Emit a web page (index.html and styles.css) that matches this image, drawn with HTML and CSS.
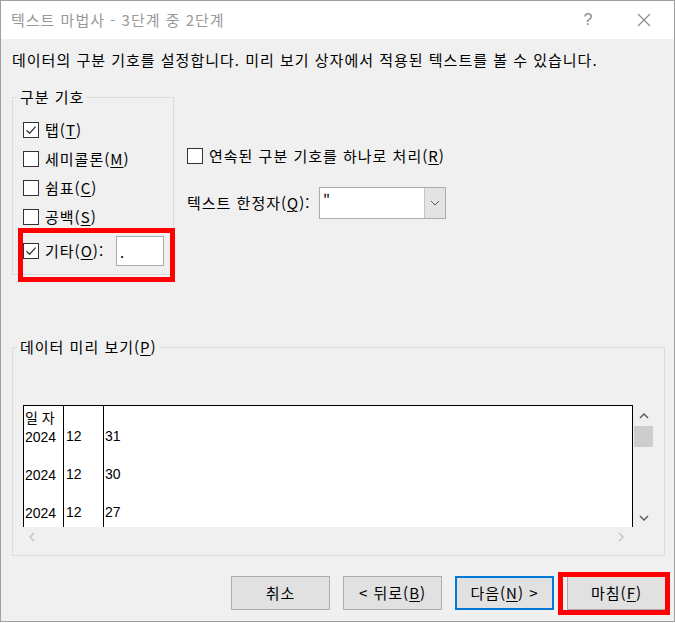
FILE: index.html
```html
<!DOCTYPE html>
<html lang="ko">
<head>
<meta charset="utf-8">
<title>텍스트 마법사</title>
<link rel="stylesheet" href="styles.css">
</head>
<body>
<div class="window">
  <div class="titlebar">
    <span class="title">텍스트 마법사 - 3단계 중 2단계</span>
    <span class="help">?</span>
    <span class="close"><svg width="14" height="14" viewBox="0 0 14 14"><path d="M1 1 L13 13 M13 1 L1 13" stroke="#8a8a8a" stroke-width="1.1" fill="none"/></svg></span>
  </div>
  <div class="content">
    <p class="intro">데이터의 구분 기호를 설정합니다. 미리 보기 상자에서 적용된 텍스트를 볼 수 있습니다.</p>
    <div class="options">
      <fieldset class="group delims">
        <legend>구분 기호</legend>
        <div class="rows">
          <div class="check"><span class="box"><svg width="14" height="14" viewBox="0 0 14 14"><path d="M2.5 7.2 L5.6 10.2 L11.6 3.6" stroke="#3a3a3a" stroke-width="1.3" fill="none"/></svg></span><span>탭(<u>T</u>)</span></div>
          <div class="check"><span class="box"></span><span>세미콜론(<u>M</u>)</span></div>
          <div class="check"><span class="box"></span><span>쉼표(<u>C</u>)</span></div>
          <div class="check"><span class="box"></span><span>공백(<u>S</u>)</span></div>
          <div class="check other"><span class="box"><svg width="14" height="14" viewBox="0 0 14 14"><path d="M2.5 7.2 L5.6 10.2 L11.6 3.6" stroke="#3a3a3a" stroke-width="1.3" fill="none"/></svg></span><span>기타(<u>O</u>):</span><span class="textbox">.</span></div>
        </div>
      </fieldset>
      <div class="right">
        <div class="check"><span class="box"></span><span>연속된 구분 기호를 하나로 처리(<u>R</u>)</span></div>
        <div class="qualifier">
          <span class="qlabel">텍스트 한정자(<u>Q</u>):</span>
          <div class="combo"><span class="value">"</span><span class="drop"><svg width="10" height="6" viewBox="0 0 10 6"><path d="M1 1 L5 5 L9 1" stroke="#555" stroke-width="1" fill="none"/></svg></span></div>
        </div>
      </div>
    </div>
    <fieldset class="group preview">
      <legend>데이터 미리 보기(<u>P</u>)</legend>
      <div class="scroller">
        <div class="grid">
          <div class="col c1"><span class="ko">일 자</span><br>2024<br><br>2024<br><br>2024</div>
          <div class="col c2"><br>12<br><br>12<br><br>12</div>
          <div class="col c3"><br>31<br><br>30<br><br>27</div>
        </div>
        <div class="vscroll">
          <svg class="arrow" width="10" height="6" viewBox="0 0 10 6"><path d="M1 5 L5 1 L9 5" stroke="#606060" stroke-width="1.5" fill="none"/></svg>
          <span class="thumb"></span>
          <svg class="arrow down" width="10" height="6" viewBox="0 0 10 6"><path d="M1 1 L5 5 L9 1" stroke="#606060" stroke-width="1.5" fill="none"/></svg>
        </div>
        <div class="hscroll">
          <svg width="6" height="10" viewBox="0 0 6 10"><path d="M5 1 L1 5 L5 9" stroke="#c4c4c4" stroke-width="1.5" fill="none"/></svg>
          <svg width="6" height="10" viewBox="0 0 6 10"><path d="M1 1 L5 5 L1 9" stroke="#c4c4c4" stroke-width="1.5" fill="none"/></svg>
        </div>
        <div class="corner"></div>
      </div>
    </fieldset>
    <div class="buttons">
      <button class="btn">취소</button>
      <button class="btn">&lt; 뒤로(<u>B</u>)</button>
      <button class="btn default">다음(<u>N</u>) &gt;</button>
      <button class="btn">마침(<u>F</u>)</button>
    </div>
  </div>
  <div class="mark mark-other"></div>
  <div class="mark mark-finish"></div>
</div>
</body>
</html>
```
FILE: styles.css
```css
* { box-sizing: border-box; }
html, body { margin: 0; padding: 0; background: #ffffff; }
body {
  font-family: "Noto Sans CJK KR", "Liberation Sans", sans-serif;
  font-size: 15px;
  letter-spacing: 1px;
  line-height: 20px;
  color: #000;
}
u { text-decoration: underline; text-underline-offset: 2px; text-decoration-thickness: 1px; }

.window {
  position: relative;
  width: 675px;
  height: 622px;
  border: 1px solid #a0a0a0;
  background: #f0f0f0;
  display: flex;
  flex-direction: column;
}

.titlebar {
  height: 38px;
  flex: none;
  background: #fff;
  display: flex;
  align-items: center;
  padding: 0 7px 0 10px;
  color: #999;
}
.title { flex: 1; }
.help {
  width: 34px;
  text-align: center;
  font-family: "Liberation Sans", sans-serif;
  font-size: 16px;
  letter-spacing: 0;
  color: #8a8a8a;
  margin-right: 16px;
}
.close { width: 46px; display: flex; justify-content: center; }

.content {
  flex: 1;
  display: flex;
  flex-direction: column;
  padding: 0 8px 0 11px;
}
.intro { margin: 11px 0 0; line-height: 20px; white-space: nowrap; }

.options { display: flex; align-items: flex-start; margin-top: 17px; }

fieldset.group {
  margin: 0;
  padding: 0;
  border: 1px solid #dcdcdc;
  min-width: 0;
}
fieldset.group legend {
  margin-left: 5px;
  padding: 0 2px;
  line-height: 20px;
}

fieldset.delims { width: 162px; height: 188px; flex: none; }
.rows { padding: 8px 0 0 10px; }

.check { display: flex; align-items: center; height: 29px; white-space: nowrap; }
.box {
  width: 16px;
  height: 16px;
  flex: none;
  border: 1px solid #333;
  background: #fff;
  margin-right: 6px;
  display: flex;
  align-items: center;
  justify-content: center;
}
.check.other { height: 40px; }
.textbox {
  width: 48px;
  height: 30px;
  margin-left: auto;
  margin-right: 9px;
  border: 1px solid #ababab;
  background: #fff;
  padding: 5px 0 0 3px;
}

.right { margin-left: 13px; padding-top: 59px; }
.right .check { height: 20px; }
.qualifier { display: flex; align-items: center; margin-top: 21px; height: 32px; }
.qlabel { width: 132px; flex: none; white-space: nowrap; }
.combo {
  width: 127px;
  height: 32px;
  border: 1px solid #ababab;
  background: #fff;
  display: flex;
}
.combo .value { padding: 3px 0 0 3px; flex: 1; }
.combo .drop {
  width: 21px;
  background: #e3e3e3;
  border-left: 1px solid #c4c4c4;
  display: flex;
  align-items: center;
  justify-content: center;
}

fieldset.preview { margin-top: 62px; width: 653px; height: 219px; flex: none; }
.scroller {
  margin: 48px 0 0 10px;
  display: grid;
  grid-template-columns: 610px 21px;
  grid-template-rows: 122px 20px;
  width: 631px;
}
.grid {
  background: #fff;
  border: 1px solid #000;
  border-bottom: none;
  display: flex;
  font-family: "Liberation Sans", "Noto Sans CJK KR", sans-serif;
  font-size: 14px;
  letter-spacing: 0;
  line-height: 19px;
  overflow: hidden;
}
.grid .ko { font-family: "Noto Sans CJK KR", sans-serif; font-size: 14px; }
.col { border-right: 1px solid #000; padding-top: 2px; height: 123px; }
.c1 { width: 40px; padding-left: 1px; }
.c2 { width: 40px; padding-left: 2px; }
.c3 { flex: 1; border-right: none; padding-left: 1px; }

.vscroll {
  display: flex;
  flex-direction: column;
  align-items: center;
  padding-top: 8px;
}
.vscroll .thumb {
  display: block;
  width: 19px;
  height: 21px;
  margin-top: 7px;
  background: #cdcdcd;
}
.vscroll .down { margin-top: auto; margin-bottom: 6px; }
.hscroll {
  display: flex;
  justify-content: space-between;
  align-items: center;
  padding: 0 9px 0 6px;
}

.buttons {
  display: flex;
  justify-content: flex-end;
  gap: 13px;
  margin-top: 20px;
}
.btn {
  width: 99px;
  height: 34px;
  border: 1px solid #adadad;
  background: #e1e1e1;
  font-family: "Noto Sans CJK KR", sans-serif;
  font-size: 15px;
  letter-spacing: 1px;
  line-height: 20px;
  color: #000;
  padding: 0;
}
.btn.default { border: 2px solid #0078d7; }

.mark { position: absolute; border: 5px solid #ff0000; }
.mark-other { left: 17px; top: 227px; width: 157px; height: 54px; }
.mark-finish { left: 557px; top: 571px; width: 112px; height: 43px; }
```
